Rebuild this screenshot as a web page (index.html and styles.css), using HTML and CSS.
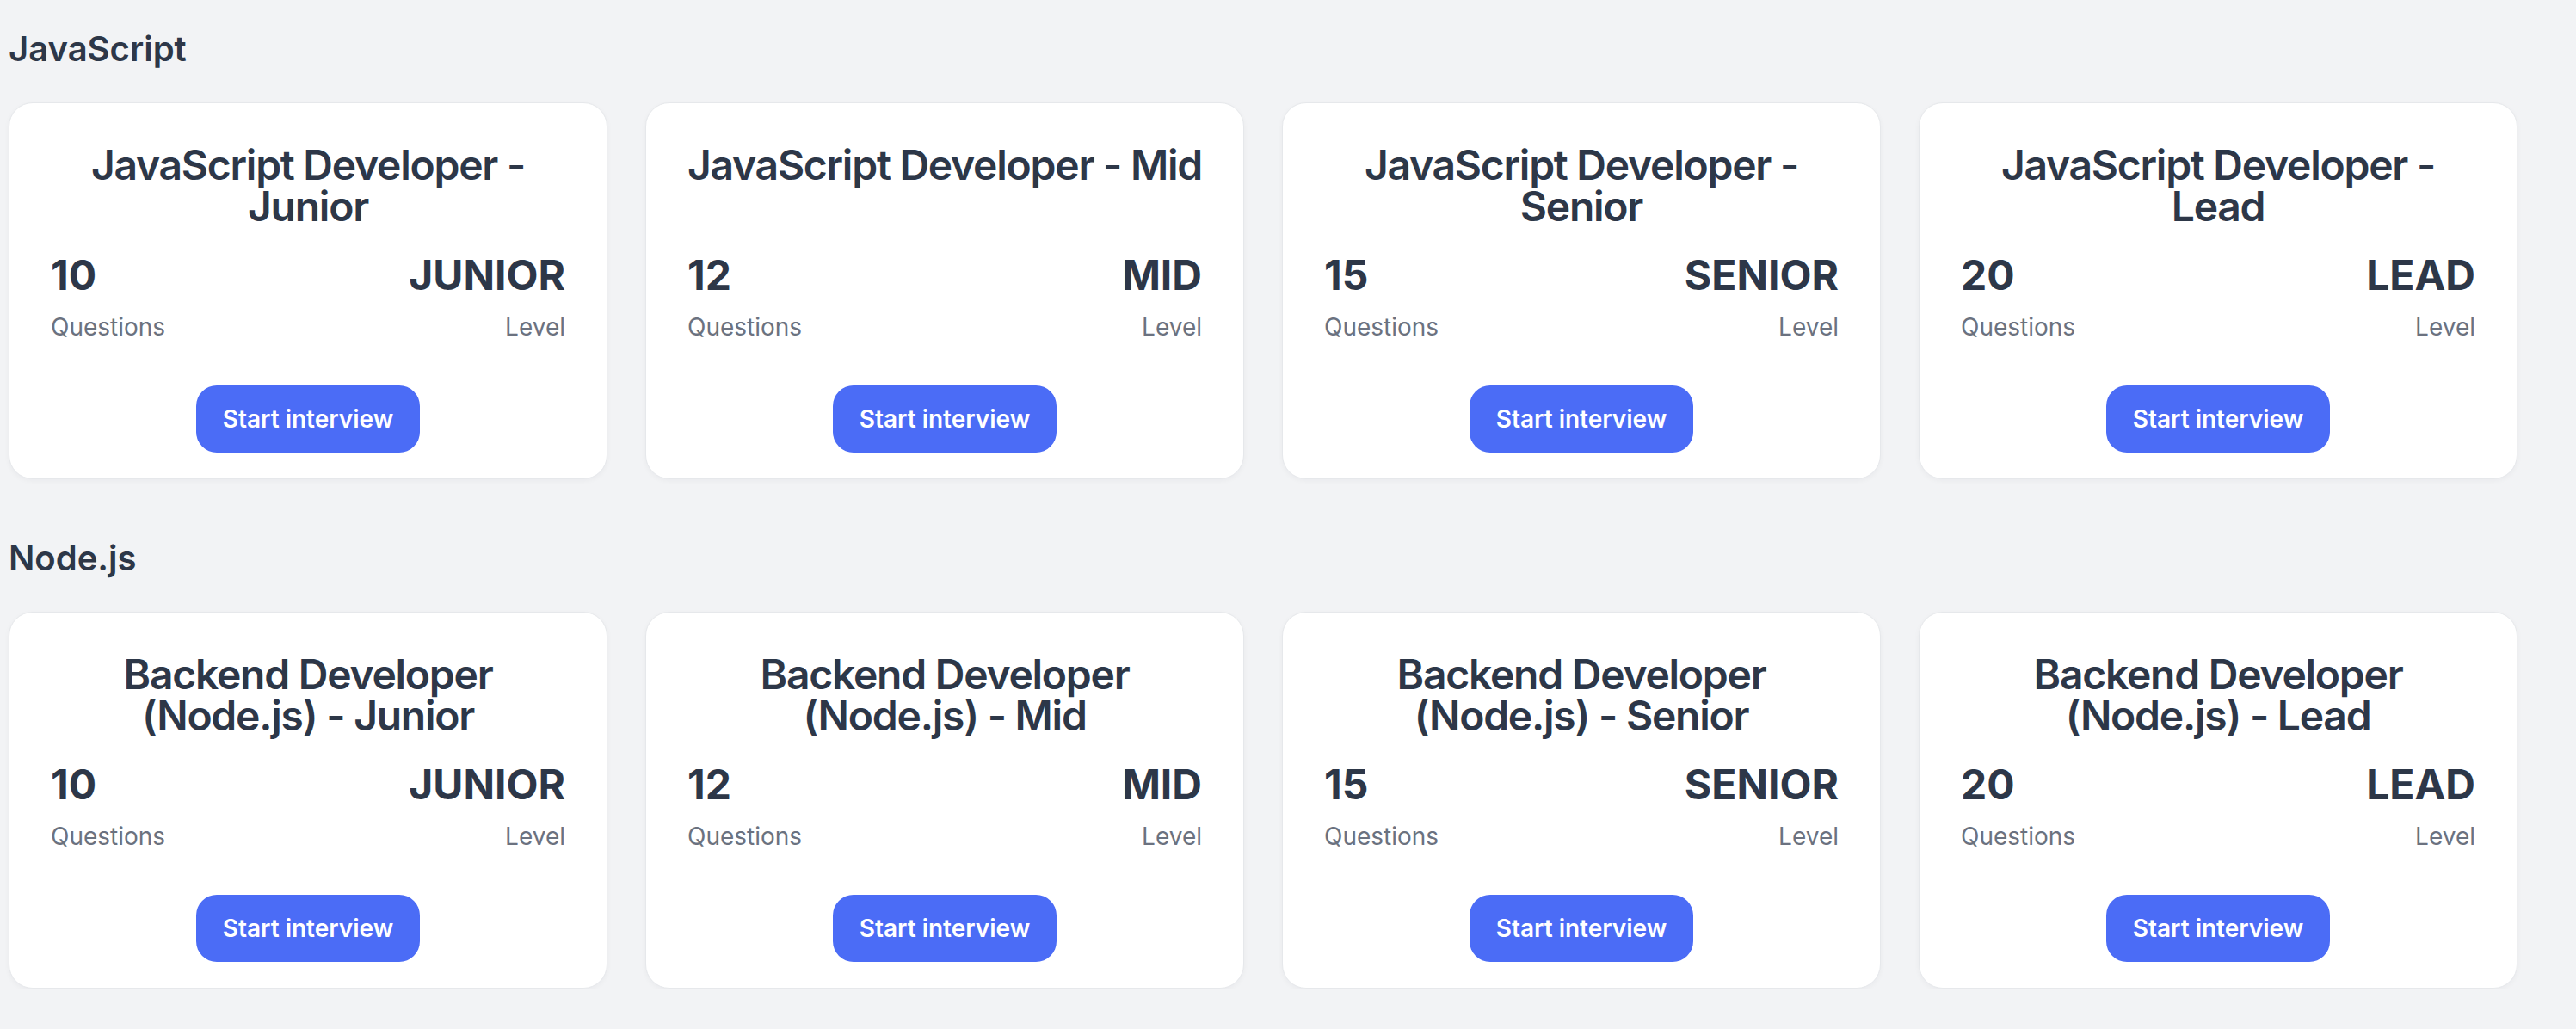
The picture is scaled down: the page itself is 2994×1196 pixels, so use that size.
FILE: index.html
```html
<!DOCTYPE html>
<html lang="en">
<head>
<meta charset="utf-8">
<title>Interviews</title>
<link rel="stylesheet" href="styles.css">
</head>
<body>
<main class="page">
  <section class="section">
    <h2 class="section-title">JavaScript</h2>
    <div class="grid">
      <div class="card">
        <h3 class="card-title">JavaScript Developer - Junior</h3>
        <div class="stats">
          <div class="stat"><div class="stat-value">10</div><div class="stat-label">Questions</div></div>
          <div class="stat stat-right"><div class="stat-value">JUNIOR</div><div class="stat-label">Level</div></div>
        </div>
        <button class="btn">Start interview</button>
      </div>
      <div class="card">
        <h3 class="card-title">JavaScript Developer - Mid</h3>
        <div class="stats">
          <div class="stat"><div class="stat-value">12</div><div class="stat-label">Questions</div></div>
          <div class="stat stat-right"><div class="stat-value">MID</div><div class="stat-label">Level</div></div>
        </div>
        <button class="btn">Start interview</button>
      </div>
      <div class="card">
        <h3 class="card-title">JavaScript Developer - Senior</h3>
        <div class="stats">
          <div class="stat"><div class="stat-value">15</div><div class="stat-label">Questions</div></div>
          <div class="stat stat-right"><div class="stat-value">SENIOR</div><div class="stat-label">Level</div></div>
        </div>
        <button class="btn">Start interview</button>
      </div>
      <div class="card">
        <h3 class="card-title">JavaScript Developer - Lead</h3>
        <div class="stats">
          <div class="stat"><div class="stat-value">20</div><div class="stat-label">Questions</div></div>
          <div class="stat stat-right"><div class="stat-value">LEAD</div><div class="stat-label">Level</div></div>
        </div>
        <button class="btn">Start interview</button>
      </div>
    </div>
  </section>
  <section class="section">
    <h2 class="section-title">Node.js</h2>
    <div class="grid">
      <div class="card">
        <h3 class="card-title">Backend Developer (Node.js) - Junior</h3>
        <div class="stats">
          <div class="stat"><div class="stat-value">10</div><div class="stat-label">Questions</div></div>
          <div class="stat stat-right"><div class="stat-value">JUNIOR</div><div class="stat-label">Level</div></div>
        </div>
        <button class="btn">Start interview</button>
      </div>
      <div class="card">
        <h3 class="card-title">Backend Developer (Node.js) - Mid</h3>
        <div class="stats">
          <div class="stat"><div class="stat-value">12</div><div class="stat-label">Questions</div></div>
          <div class="stat stat-right"><div class="stat-value">MID</div><div class="stat-label">Level</div></div>
        </div>
        <button class="btn">Start interview</button>
      </div>
      <div class="card">
        <h3 class="card-title">Backend Developer (Node.js) - Senior</h3>
        <div class="stats">
          <div class="stat"><div class="stat-value">15</div><div class="stat-label">Questions</div></div>
          <div class="stat stat-right"><div class="stat-value">SENIOR</div><div class="stat-label">Level</div></div>
        </div>
        <button class="btn">Start interview</button>
      </div>
      <div class="card">
        <h3 class="card-title">Backend Developer (Node.js) - Lead</h3>
        <div class="stats">
          <div class="stat"><div class="stat-value">20</div><div class="stat-label">Questions</div></div>
          <div class="stat stat-right"><div class="stat-value">LEAD</div><div class="stat-label">Level</div></div>
        </div>
        <button class="btn">Start interview</button>
      </div>
    </div>
  </section>
</main>
</body>
</html>
```
FILE: styles.css
```css
html, body {
  margin: 0;
  padding: 0;
}
body {
  background: #f2f3f5;
  font-family: Inter, "Noto Sans", "Liberation Sans", sans-serif;
  color: #2d3748;
}
.page {
  padding: 29px 0 0 10px;
}
.section + .section {
  margin-top: 64px;
}
.section-title {
  margin: 0 0 34px;
  font-size: 40px;
  line-height: 56px;
  font-weight: 600;
  color: #2d3748;
}
.grid {
  display: grid;
  grid-template-columns: repeat(4, 696px);
  gap: 44px;
}
.card {
  background: #ffffff;
  border: 1px solid #e6e8eb;
  border-radius: 28px;
  padding: 48px 48px 30px;
  box-shadow: 0 2px 6px rgba(15, 23, 42, 0.04);
  display: flex;
  flex-direction: column;
}
.card-title {
  margin: 0 -10px;
  height: 96px;
  font-size: 48px;
  line-height: 48px;
  font-weight: 600;
  letter-spacing: -0.026em;
  text-align: center;
  color: #2d3748;
}
.stats {
  margin-top: 32px;
  display: flex;
  justify-content: space-between;
}
.stat-right {
  text-align: right;
}
.stat-value {
  font-size: 48px;
  line-height: 48px;
  font-weight: 700;
  color: #2d3748;
}
.stat-label {
  margin-top: 16px;
  font-size: 28px;
  line-height: 40px;
  color: #6b7280;
}
.btn {
  align-self: center;
  margin-top: 48px;
  height: 78px;
  padding: 0 31px;
  border: none;
  border-radius: 24px;
  background: #4b6cf6;
  color: #ffffff;
  font-family: Inter, "Noto Sans", "Liberation Sans", sans-serif;
  font-size: 28px;
  font-weight: 600;
  cursor: pointer;
}
```
